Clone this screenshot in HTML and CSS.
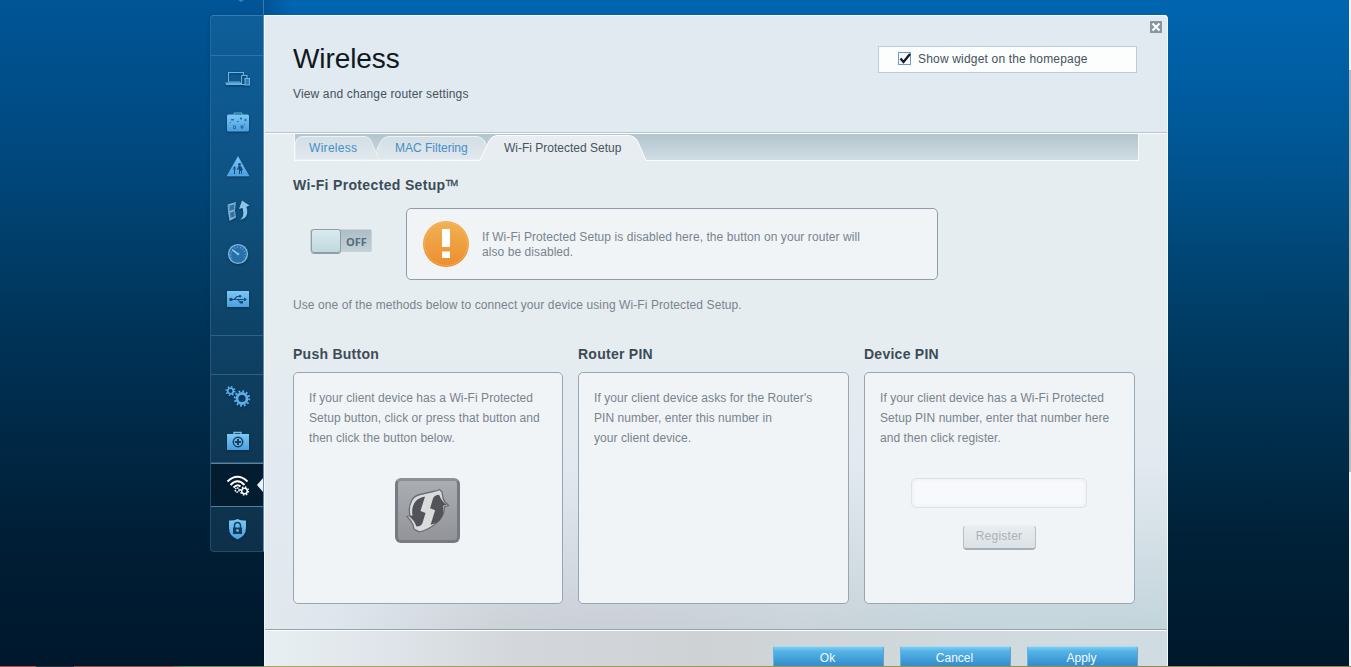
FILE: index.html
```html
<!DOCTYPE html>
<html lang="en">
<head>
<meta charset="utf-8">
<title>Wireless</title>
<link rel="stylesheet" href="styles.css">
</head>
<body>
<svg class="defs" width="0" height="0">
  <defs>
    <linearGradient id="ico" x1="0" y1="0" x2="0" y2="1"><stop offset="0" stop-color="#7cc8f7"/><stop offset="1" stop-color="#4a9fde"/></linearGradient>
    <linearGradient id="orange" x1="0" y1="0" x2="0" y2="1"><stop offset="0" stop-color="#efb254"/><stop offset="1" stop-color="#ee8d2e"/></linearGradient>
    <linearGradient id="tab" x1="0" y1="0" x2="0" y2="1"><stop offset="0" stop-color="#d3dee5"/><stop offset="1" stop-color="#e2e9ee"/></linearGradient>
  </defs>
</svg>
<div class="page">
  <nav class="side">
    <div class="side-top"><svg width="8" height="2"><path d="M1 0h6l-3 2z" fill="#3f80b7"/></svg></div>
    <div class="menu">
      <div class="cap"></div>
      <div class="group apps">
        <a class="item"><svg width="26" height="26" viewBox="0 0 26 26" fill="none" stroke="#6ab4e4" stroke-width="1.1"><path d="M3.500 16V6.500h15V10M3.500 16H15" fill="none"/><path d="M1 17h14.500v1.500H1.500z" fill="#5ba5d8"/><path d="M16.500 9.500h5.500v3M16.500 9.500V18.500h3.500"/><path d="M20 12.500h4.500v6.500H20z" fill="#347bb2"/></svg></a>
        <a class="item"><svg width="26" height="26" viewBox="0 0 26 26"><path d="M9 4.500v-1.500h8v1.500" fill="none" stroke="#69b9ed"/><rect x="2" y="4.500" width="22" height="17" rx="1.500" fill="url(#ico)"/><g fill="#2c72aa"><path d="M6 9h3v1.500H6zM15 7.500h2v2h-2zM19 10l1.500-1.500L22 10l-1.500 1.500zM8 15.500h3v3.500H8zM9 16.500v1.500h1v-1.500zM12 11h2v1h-2zM15.500 16l1.500-1 1.500 1v2l-1.500 1-1.500-1zM5 12h1v1H5zM19 14h1v1h-1z"/></g></svg></a>
        <a class="item"><svg width="26" height="26" viewBox="0 0 26 26"><path d="M13 2.500L24 22H2z" fill="url(#ico)" stroke="#63b5ec" stroke-width=".6" stroke-linejoin="round"/><g fill="#164d7c"><circle cx="14.500" cy="10.500" r="1.400"/><path d="M13.500 12h2.500l2 4h-1v4h-1v-3h-1v3h-1v-5l-1.500 1-.5-.8zM8 14.500h3v1h-1V20H9v-4.500H7.500z"/><circle cx="9.500" cy="13.500" r="1"/></g></svg></a>
        <a class="item up"><svg width="26" height="26" viewBox="0 0 26 26"><path d="M2.500 7.500L11 5l-1 8.500 1 7L4.500 24l-1.500-8.500z" fill="#7bb5dc"/><path d="M4.500 8.700l4.800-1.400-.4 5.200-4.400 1.500zM5 15.700l4-1.500.5 5.300L5.800 21z" fill="#33719f"/><path d="M3.400 8l.8 15M10.200 6l-.6 8 .6 6.500" stroke="#2b6698" stroke-width=".7" fill="none" stroke-dasharray="1 1.400"/><path d="M15 22.500c3.500-1.500 4-6 2.500-11.500L14 12l3-8.500 7.500 5-3 1.200C23.500 17 21.500 22 15 22.500z" fill="#8ac4e9"/></svg></a>
        <a class="item up"><svg width="26" height="26" viewBox="0 0 26 26"><circle cx="13" cy="13" r="9.400" fill="#296fa8" stroke="#78bae4" stroke-width="1.400"/><path d="M6.500 17A7.300 7.300 0 1 1 19.500 17" fill="none" stroke="#67aad8" stroke-width="1.700" stroke-dasharray=".8 2"/><path d="M13 13L7.500 9" stroke="#a0dcff" stroke-width="1.500"/><circle cx="13" cy="13" r="1.300" fill="#83c5ef"/></svg></a>
        <a class="item"><svg width="26" height="26" viewBox="0 0 26 26"><path d="M2 5h22v16H2z" fill="url(#ico)"/><g stroke="#184d79" stroke-width="1.100" fill="none"><path d="M6 13.500h14M9 13.500l3-3h3M13 13.500l2 3h2"/></g><circle cx="6" cy="13.500" r="1.800" fill="#184d79"/><circle cx="15" cy="10.300" r="1.300" fill="#184d79"/><path d="M15 15h3v2.500h-3zM19 11.500l3 2-3 2z" fill="#184d79"/></svg></a>
      </div>
      <div class="cap gap"></div>
      <div class="group setup">
        <a class="item"><svg width="26" height="26" viewBox="0 0 26 26" fill="none" stroke="#5caee9"><circle cx="5.500" cy="6" r="2.800" stroke-width="1.800"/><circle cx="5.500" cy="6" r="4.300" stroke-width="1.600" stroke-dasharray="1.500 1.877"/><circle cx="17" cy="13.500" r="5" stroke-width="2.800"/><circle cx="17" cy="13.500" r="7.300" stroke-width="2" stroke-dasharray="1.900 1.922"/></svg></a>
        <a class="item"><svg width="26" height="26" viewBox="0 0 26 26"><path d="M9 5V3.500h7V5" fill="none" stroke="#76bee9" stroke-width="1.500"/><path d="M2 5h22v16H2z" fill="url(#ico)"/><circle cx="13" cy="13" r="4.700" fill="#6cb8e9" stroke="#123f61" stroke-width="1.500"/><path d="M13 10v6M10 13h6" stroke="#123f61" stroke-width="2"/></svg></a>
      </div>
      <a class="item active"><svg width="26" height="26" viewBox="0 0 26 26" fill="none" stroke="#fff"><path d="M2.500 8.500Q12.500-1 22.500 8.500M5.500 12Q12.500 4.500 19.500 12M8.500 14.500Q12.500 10.500 15.500 13.500" stroke-width="1.900"/><circle cx="12.200" cy="17" r="2" stroke-width="1.500" stroke-dasharray="1.500 .6"/><circle cx="19.500" cy="18" r="2.800" stroke-width="1.500"/><circle cx="19.500" cy="18" r="4" stroke-width="1.400" stroke-dasharray="1.500 1.640"/></svg><span class="pointer"></span></a>
      <a class="item last"><svg width="26" height="26" viewBox="0 0 26 26"><path d="M4 4.500q4.500.5 8.500-1.500 4 2 8.500 1.500V12q0 8-8.500 11.500Q4 20 4 12z" fill="url(#ico)"/><path d="M9.500 12V9.500a3 3 0 0 1 6 0V12" stroke="#123e5d" stroke-width="1.500" fill="none"/><path d="M8 11.500h9V18H8z" fill="#123e5d"/><circle cx="12.500" cy="14.500" r="1.300" fill="#7bc5f0"/></svg></a>
    </div>
  </nav>
  <main class="panel">
    <header class="head">
      <div class="titles"><h1>Wireless</h1><p class="sub">View and change router settings</p></div>
      <label class="widget"><svg width="13" height="13"><rect x=".5" y=".5" width="12" height="12" fill="#f7fbff" stroke="#6e9dc0"/><path d="M2.500 6.500l3 3.500L12 2" fill="none" stroke="#101c2b" stroke-width="2.300"/></svg><span>Show widget on the homepage</span></label>
      <svg class="close" width="12" height="12"><path d="M0 0h12v12H0z" fill="#88969f"/><path d="M2.500 2.500l7 7M9.500 2.500l-7 7" stroke="#fff" stroke-width="2"/></svg>
    </header>
    <section class="body">
      <div class="tabs">
        <svg class="tab-shapes" width="844" height="27">
          <path d="M0 26V11Q1 2.500 8 2.500H69Q74 2.500 76 7L84 26z" fill="url(#tab)" stroke="#edf3f6"/>
          <path d="M84 26Q80 20 83 13L86 7Q89 2.500 95 2.500H181Q187 2.500 190 8L196 26z" fill="url(#tab)" stroke="#edf3f6"/>
          <path d="M185 27L194 7Q197 1.500 202 1.500H333Q340 1.500 343 8L351 27z" fill="#e7edf1"/>
          <path d="M0 26.500H185L194 7Q197 1.500 202 1.500H333Q340 1.500 343 8L351 26.500H844" fill="none" stroke="#fbfdfe"/>
        </svg>
        <a class="tab one">Wireless</a><a class="tab two">MAC Filtering</a><a class="tab three">Wi-Fi Protected Setup</a>
      </div>
      <h2 class="section">Wi-Fi Protected Setup<sup>TM</sup></h2>
      <div class="status">
        <div class="switch"><i></i><b>OFF</b></div>
        <div class="notice"><svg width="48" height="48"><circle cx="24" cy="24" r="23" fill="url(#orange)"/><circle cx="24" cy="24" r="21.500" fill="none" stroke="#f5bd6c" stroke-opacity=".5"/><path d="M20 9h8v18h-8zM20 31.500h8V38h-8z" fill="#fff"/></svg><p>If Wi-Fi Protected Setup is disabled here, the button on your router will<br>also be disabled.</p></div>
      </div>
      <p class="hint">Use one of the methods below to connect your device using Wi-Fi Protected Setup.</p>
      <div class="methods">
        <section><h2>Push Button</h2><div class="card"><p>If your client device has a Wi-Fi Protected<br>Setup button, click or press that button and<br>then click the button below.</p>
          <button class="wps"><svg width="45" height="46" viewBox="0 0 45 46"><path d="M6.500 13Q8.500 8 15 6.500L28 3.500Q32 3 34.500 1.500L37 4l1 6q1 4 5.500 7.500l-4 1.300q.3 10-10 18Q21 43 14 43.800L9 41 8 36.800Q6 32 2 28.500l3-1Q3 20 6.500 13z" fill="#d9dbdd" stroke="#6c6e74" stroke-width="1.300"/><path d="M20 8.500C10 10 6 18 7.500 27.500L4 28.300Q9 32 11.500 38.500Q16 38.500 17.500 35L20.500 25 15.500 23z" fill="#515358"/><path transform="rotate(180 22.800 22.600)" d="M20 8.500C10 10 6 18 7.500 27.500L4 28.300Q9 32 11.500 38.500Q16 38.500 17.500 35L20.500 25 15.500 23z" fill="#515358"/></svg></button></div></section>
        <section><h2>Router PIN</h2><div class="card"><p>If your client device asks for the Router's<br>PIN number, enter this number in<br>your client device.</p></div></section>
        <section><h2>Device PIN</h2><div class="card"><p>If your client device has a Wi-Fi Protected<br>Setup PIN number, enter that number here<br>and then click register.</p><input class="pin" type="text"><button class="register">Register</button></div></section>
      </div>
    </section>
    <footer class="foot"><button>Ok</button><button>Cancel</button><button>Apply</button></footer>
  </main>
  <div class="scroll"></div>
</div>
<div class="edge"></div>
</body>
</html>
```
FILE: styles.css
```css
* { box-sizing: border-box; }
body { margin: 0; height: 667px; overflow: hidden; font: 12px/15px "Liberation Sans", Arial, sans-serif; color: #45525d; }
h1, h2, p { margin: 0; font-weight: normal; }
button, input { font: inherit; padding: 0; }
.defs { position: absolute; }
.page { height: 666px; display: grid; grid-template-columns: 210px 54px 904px 1fr 2px; background: linear-gradient(90deg, rgba(0,20,45,.2) 264px, rgba(0,20,45,0) 292px), linear-gradient(#0065b0 0, #005b9e 100px, #00538d 175px, #004777 250px, #003b63 330px, #002d4b 440px, #002138 540px, #00182b 667px); }
.edge { height: 1px; background: linear-gradient(90deg, #a35b4c 0 36px, #32343c 36px 74px, #8e5148 74px 170px, #6e8557 180px 264px, #a9a65f 264px, #8b8550 100%); }
.side { grid-column: 2; }
.side-top { height: 15px; padding-left: 27px; display: flex; border-right: 1px solid #387bab; }
.menu { height: 537px; border: 1px solid rgba(90,155,200,.25); border-top-color: rgba(90,155,200,.5); border-right-color: #648ca9; border-radius: 4px 0 0 4px; background: rgba(100,160,195,.14); box-shadow: -1px 0 3px rgba(0,25,50,.15); }
.cap { height: 40px; border-bottom: 1px solid rgba(115,175,215,.3); }
.group { display: flex; flex-direction: column; border-bottom: 1px solid rgba(115,175,215,.3); }
.apps { height: 280px; padding-top: 1px; }
.gap { height: 39px; }
.setup { height: 88px; padding-top: 1px; }
.item { height: 44px; flex-shrink: 0; display: flex; justify-content: center; align-items: center; padding-left: 1px; position: relative; }
.item svg { filter: drop-shadow(0 1px 1px rgba(0,25,50,.5)); }
.up svg { margin-top: -2px; }
.active { height: 44px; padding-top: 2px; border-top: 1px solid #57839f; border-bottom: 1px solid #527e98; background: #041c30; }
.last { height: 44px; }
.pointer { position: absolute; right: 0; top: 14px; border: 7px solid transparent; border-left: 0; border-right: 6px solid #edf3f6; }
.panel { margin-top: 15px; height: 651px; display: flex; flex-direction: column; border-left: 1px solid #f3f7fa; border-right: 1px solid #f6fafc; border-radius: 0 4px 0 0; background: linear-gradient(#e5edf1 0, #e6edf1 330px, #e2e9f0 450px, rgba(226,233,240,.45) 540px, rgba(226,233,240,0) 610px), linear-gradient(96deg, #e4ebf0 0, #dfe5ec 14%, #cdd2d9 31%, #cacfd8 46%, #cbd4da 60%, #c5d5dc 78%, #c3d5db 100%); }
.head { height: 118px; position: relative; display: flex; justify-content: space-between; padding: 0 30px 0 28px; background: #e0eaf0; border-top: 1px solid #fff; border-bottom: 1px solid #b3c5d2; border-radius: 0 4px 0 0; }
h1 { margin-top: 27px; font-size: 28px; line-height: 32px; letter-spacing: -.08px; color: #101820; }
.sub { margin-top: 12px; letter-spacing: .14px; }
.widget { width: 259px; height: 27px; margin-top: 30px; padding-left: 19px; display: flex; align-items: center; background: #fcfdfd; border: 1px solid #bdcbd7; letter-spacing: .18px; }
.widget span { margin-left: 7px; }
.widget svg { margin-top: -2px; }
.close { position: absolute; right: 5px; top: 5px; }
.body { height: 497px; padding: 0 32px 0 28px; border-top: 1px solid #fff; border-bottom: 1px solid #92a4ac; }
.tabs { width: 845px; height: 27px; margin-left: 1px; display: flex; position: relative; background: linear-gradient(#b3c4cd, #d1dee5); border: solid #f7fafb; border-width: 0 1px; }
.tab-shapes { position: absolute; left: 0; top: 0; }
.tab { position: relative; padding-top: 7px; color: #438fc7; white-space: nowrap; }
.one { width: 86px; margin-left: 14px; letter-spacing: .3px; }
.two { width: 109px; }
.three { color: #46545e; }
h2 { font-size: 14px; line-height: 18px; font-weight: bold; letter-spacing: .26px; color: #3b4c57; }
.section { margin-top: 15px; letter-spacing: .34px; }
sup { font-size: 9.500px; font-weight: normal; line-height: 0; vertical-align: 4px; letter-spacing: -.9px; -webkit-text-stroke: .3px #3b4c57; }
.status { display: flex; margin-top: 14px; }
.switch { width: 62px; height: 23px; margin: 21px 34px 0 17px; display: flex; align-items: center; background: linear-gradient(#aebec6,#c2d0d6); border-radius: 2px; border: 1px solid #c8d3d9; }
.switch i { width: 30px; height: 24px; flex: none; border: 1px solid #899fa9; border-radius: 3px; background: linear-gradient(#daeaee,#bfd8de); box-shadow: 0 1px #929fa6; }
.switch b { margin: 2px 0 0 5px; font: bold 11px/20px "Open Sans", sans-serif; color: #566c79; }
.notice { width: 532px; height: 72px; padding-left: 15px; display: flex; align-items: center; border: 1px solid #8e9ca9; border-radius: 5px; background: #f0f4f7; color: #7a838c; letter-spacing: .07px; }
.notice p { margin: 2px 0 0 12px; }
.hint { margin-top: 18px; color: #7a838c; letter-spacing: .09px; }
.methods { display: grid; grid-template-columns: 270px 271px 271px; column-gap: 15px; margin-top: 32px; }
.card { height: 232px; margin-top: 9px; padding: 15px; border: 1px solid #98a6af; border-radius: 5px; background: #f0f4f7; display: flex; flex-direction: column; align-items: center; color: #7a838c; line-height: 20px; letter-spacing: .06px; }
.card p { width: 100%; white-space: nowrap; }
.wps { width: 65px; height: 65px; margin-top: 30px; margin-right: 1px; display: flex; align-items: center; justify-content: center; border: 3px solid #777a80; border-top-color: #8d9197; border-radius: 6px; background: linear-gradient(#aaadb2,#929498); }
.pin { width: 176px; height: 30px; margin-top: 30px; margin-right: 2px; border: 1px solid #dde3e7; border-radius: 5px; background: #f7f9fd; box-shadow: inset 0 0 4px #e4eaee; }
.register { width: 73px; height: 25px; margin-top: 17px; padding: 0 1px 2px 0; letter-spacing: .25px; border: 1px solid #b7bfc5; border-top-color: #edf1f4; border-bottom: 2px solid #a8b0b7; border-radius: 4px; background: linear-gradient(#e9edf0,#dbe1e5); color: #a9b2ba; }
.foot { flex: 1; min-height: 0; overflow: hidden; display: flex; justify-content: flex-end; gap: 16px; padding: 15px 29px 0 0; border-top: 1px solid #fff; background: linear-gradient(90deg, #e8eff2, #dfe5ea 13%, #d3d7dc 28%, #cfd2d5 48%, #d0dade 80%, #cfdde3); }
.foot button { width: 111px; height: 30px; flex: none; padding: 0 2px 6px 0; color: #f3faff; background: linear-gradient(#80cdf2 0, #55b4e6 4px, #3a93d1 16px, #2e83c3 24px); border: 1px solid #61b7e2; border-top-color: #a5dcf3; border-right-color: #719ec0; border-radius: 2px; }
.scroll { grid-column: 5; background: linear-gradient(#f3f3f3 70px, #bbb 70px 472px, #f3f3f3 472px); }
```
